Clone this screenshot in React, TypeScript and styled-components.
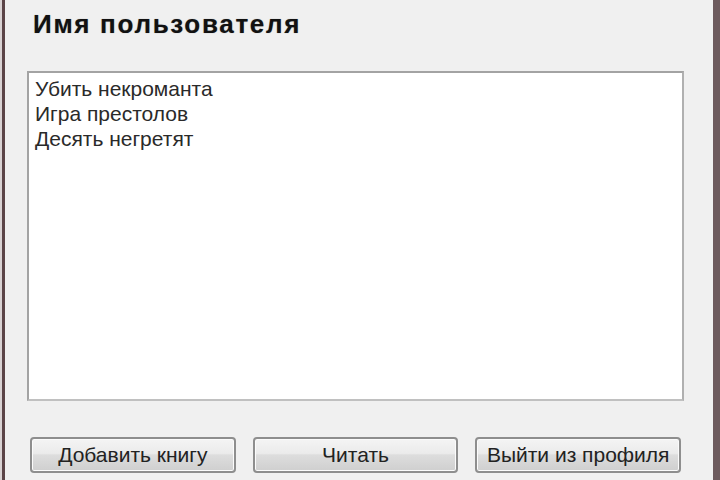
import { createGlobalStyle, styled } from "styled-components";

const GlobalStyle = createGlobalStyle`
  html, body {
    margin: 0;
    padding: 0;
    background: #f0f0f0;
  }
`;

const books = ["Убить некроманта", "Игра престолов", "Десять негретят"];

export default function App() {
  return (
    <>
      <GlobalStyle />
      <Frame>
        <Content>
          <Title>Имя пользователя</Title>
          <ListBox>
            {books.map((b) => (
              <Item key={b}>{b}</Item>
            ))}
          </ListBox>
          <ButtonRow>
            <Button>Добавить книгу</Button>
            <Button>Читать</Button>
            <Button>Выйти из профиля</Button>
          </ButtonRow>
        </Content>
      </Frame>
    </>
  );
}

const Frame = styled.div`
  width: 720px;
  height: 480px;
  box-sizing: border-box;
  display: flex;
  overflow: hidden;
  padding-left: 2px;
  background: #d9d2d3;
`;

const Content = styled.div`
  flex: 1;
  display: flex;
  flex-direction: column;
  background: #f0f0f0;
  border-left: 3px solid #5b4447;
  border-right: 7px solid #6d5b5e;
  padding: 9px 29px 0 22px;
  font-family: "Liberation Sans", Arial, sans-serif;
  color: #1a1a1a;
`;

const Title = styled.div`
  font-size: 26px;
  line-height: 31px;
  font-weight: bold;
  letter-spacing: 1.7px;
  padding-left: 6px;
  color: #111;
  text-shadow: 0 0 1px rgba(0, 0, 0, 0.4);
`;

const ListBox = styled.div`
  margin-top: 31px;
  height: 330px;
  box-sizing: border-box;
  background: #fff;
  border: 2px solid #a3a3a3;
  border-right-color: #b0b0b0;
  border-bottom-color: #c0c0c0;
  padding: 3px 6px;
`;

const Item = styled.div`
  font-size: 21px;
  line-height: 25px;
  color: #2a2a2a;
`;

const ButtonRow = styled.div`
  margin-top: 36px;
  display: flex;
  gap: 17px;
  padding: 0 3px;
`;

const Button = styled.button`
  flex: 1 1 0;
  height: 36px;
  border: 2px solid #8e8e8e;
  border-radius: 4px;
  background: linear-gradient(#f4f4f4 0%, #ebebeb 45%, #dddddd 50%, #cfcfcf 100%);
  font-family: "Liberation Sans", Arial, sans-serif;
  font-size: 21px;
  color: #222;
  padding: 0;
  box-shadow: inset 0 0 0 1px #fbfbfb;
`;
